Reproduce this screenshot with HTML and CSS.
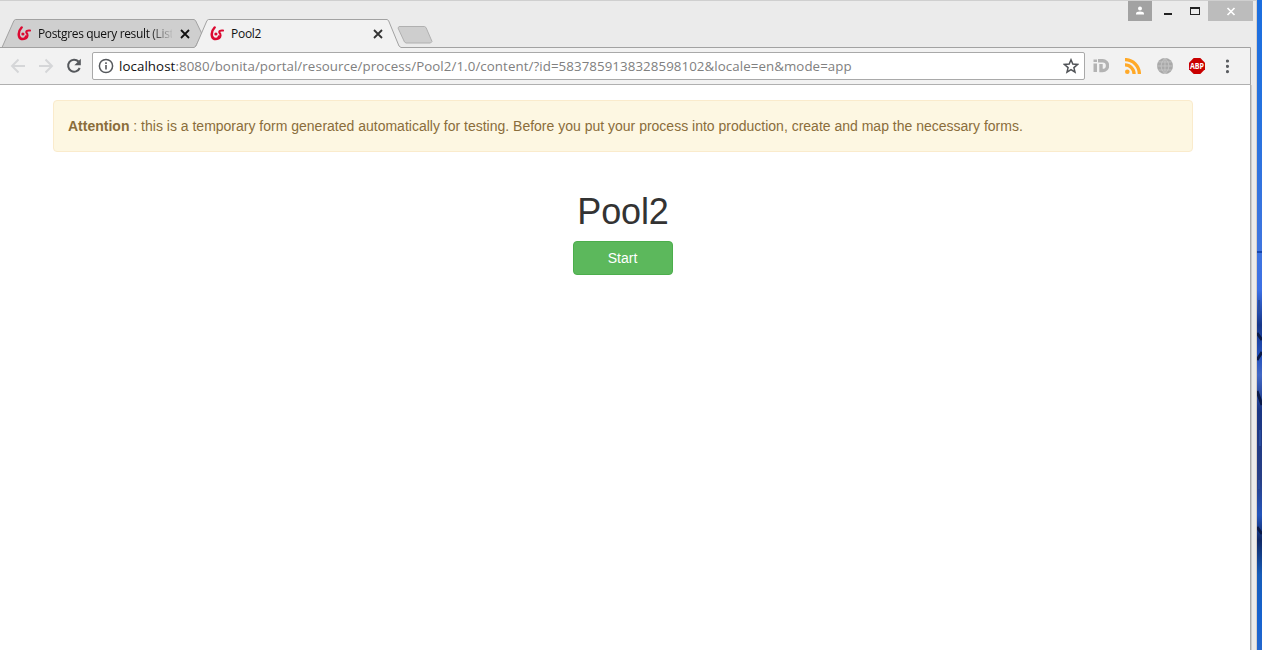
FILE: index.html
```html
<!DOCTYPE html>
<html lang="en">
<head>
<meta charset="utf-8">
<title>Pool2</title>
<link rel="stylesheet" href="styles.css">
</head>
<body>
<div class="window">
  <header class="tabstrip">
    <svg class="tab-shapes" width="1251" height="48" viewBox="0 0 1251 48">
      <path d="M2 47.500L14 20.500L15.500 19.500H194L195.500 20.500L202 34L195 47.500Z" fill="#cfcfcf" stroke="#a2a2a2"/>
      <path d="M0 47.500H194L196 46L207 20.500L208.500 19.500H387L388.500 20.500L399 46L401 47.500H1250.500V49H0Z" fill="#f2f2f2" stroke="#a2a2a2"/>
      <path d="M399 26.500H424.500L426 27.500L432 41.500L430.500 43H406L404.500 42L398 28Z" fill="#cecece" stroke="#b0b0b0"/>
    </svg>
    <div class="tab tab-first">
      <svg class="logo" width="14" height="16" viewBox="0 0 14 16"><use href="#bonita"/></svg>
      <span class="tab-title faded">Postgres query result (List</span>
      <svg class="tab-close" width="10" height="10" viewBox="0 0 10 10"><path d="M1 1l8 8M9 1L1 9"/></svg>
    </div>
    <div class="tab">
      <svg class="logo" width="14" height="16" viewBox="0 0 14 16"><g id="bonita" fill="none" stroke="#dc0a32" stroke-linecap="round"><path d="M4.600 1.500C2.200 4 1.300 7.500 2.100 10.500C3.200 13.900 8.300 13.900 9 10.500" stroke-width="2.500"/><path d="M13 4.600C10.500 4.200 8.600 5.200 9.500 6.800C11 8.400 11 11 9 12.300" stroke-width="2"/><circle cx="5.900" cy="8" r="1.600" fill="#dc0a32" stroke="none"/></g></svg>
      <span class="tab-title">Pool2</span>
      <svg class="tab-close" width="10" height="10" viewBox="0 0 10 10"><path d="M1 1l8 8M9 1L1 9"/></svg>
    </div>
    <div class="controls">
      <span class="profile"><svg width="10" height="10" viewBox="0 0 10 10" fill="#fff"><circle cx="5" cy="2.500" r="2"/><path d="M1 8.500V7.500Q1 5.500 5 5.500T9 7.500V8.500Z"/></svg></span>
      <svg width="56" height="19" viewBox="0 0 56 19"><path d="M12 12h8v2h-8zM38 6h10v8h-10zM39 8v5h8v-5z" fill="#222" fill-rule="evenodd"/></svg>
      <span class="close"><svg width="10" height="9" viewBox="0 0 10 9"><path d="M1.500 1l7 7M8.500 1l-7 7" stroke="#fff" stroke-width="1.700"/></svg></span>
    </div>
  </header>
  <nav class="toolbar">
    <svg class="nav-icons" width="92" height="36" viewBox="0 0 92 36" fill="none" stroke-width="1.900">
      <path d="M25 18H12.500M18.500 11.500L12 18L18.500 24.500M39 18H51.500M45.500 11.500L52 18L45.500 24.500" stroke="#d5d6d8"/>
      <path d="M78.500 13.500A6 6 0 1 0 79.700 20" stroke="#55585c" stroke-width="2"/><path d="M80.800 10.800V17.200H74.400Z" fill="#55585c"/>
    </svg>
    <div class="omnibox">
      <svg width="16" height="16" viewBox="0 0 16 16"><circle cx="8" cy="8" r="6.600" fill="none" stroke="#55585c" stroke-width="1.500"/><path d="M7.200 7h1.600v4.600H7.200zM7.200 4.300h1.600v1.600H7.200z" fill="#55585c"/></svg>
      <span class="url"><b>localhost</b>:8080/bonita/portal/resource/process/Pool2/1.0/content/?id=5837859138328598102&amp;locale=en&amp;mode=app</span>
      <svg class="star" width="16" height="16" viewBox="0 0 16 16"><path d="M8 1.800L9.800 6.100L14.500 6.500L10.900 9.600L12 14.200L8 11.700L4 14.200L5.100 9.600L1.500 6.500L6.200 6.100Z" fill="none" stroke="#505357" stroke-width="1.500"/></svg>
    </div>
    <div class="extensions">
      <svg width="16" height="16" viewBox="0 0 16 16"><path d="M.5 1.500h3.500v2.500H.5zM.5 5.500h3.500v8.500H.5z" fill="#b3b3b3"/><path d="M5 2.800h4.700a4.800 4.800 0 0 1 0 9.700H8V6" fill="none" stroke="#b3b3b3" stroke-width="3.400"/></svg>
      <svg width="16" height="16" viewBox="0 0 16 16"><circle cx="2.300" cy="13.700" r="2.300" fill="#ffa928"/><path d="M0 6.900a9.100 9.100 0 0 1 9.100 9.100M0 1.600a14.400 14.400 0 0 1 14.400 14.400" fill="none" stroke="#ffa928" stroke-width="3.300"/></svg>
      <svg width="16" height="16" viewBox="0 0 16 16"><circle cx="8" cy="8" r="8" fill="#a9a9a9"/><path d="M8 0v16M0 8h16M1.500 4h13M1.500 12h13M8 0Q0 8 8 16M8 0Q16 8 8 16" fill="none" stroke="#c9c9c9" stroke-width=".8"/></svg>
      <svg width="16" height="16" viewBox="0 0 16 16"><path d="M4.700 0h6.600L16 4.700v6.600L11.300 16H4.700L0 11.300V4.700Z" fill="#c90000"/><text class="abp" x="8" y="11" text-anchor="middle" textLength="14" lengthAdjust="spacingAndGlyphs">ABP</text></svg>
      <svg class="menu" width="4" height="16" viewBox="0 0 4 16" fill="#5a5d61"><circle cx="1.500" cy="3" r="1.600"/><circle cx="1.500" cy="8.300" r="1.600"/><circle cx="1.500" cy="13.600" r="1.600"/></svg>
    </div>
  </nav>
  <main class="page">
    <div class="alert"><strong>Attention</strong> : this is a temporary form generated automatically for testing. Before you put your process into production, create and map the necessary forms.</div>
    <h1 class="title">Pool2</h1>
    <button class="start">Start</button>
  </main>
</div>
<div class="desktop"><svg width="5" height="650" viewBox="0 0 5 650" fill="none" stroke="#0a1a48">
  <path d="M0 252h5" stroke="#1747ae" stroke-width="2"/><path d="M0 333l5 7M0 360l5-8M0 391l5 14M0 527l5 7" stroke-width="3"/><path d="M2 300v12M3 430v16M2 480v9" stroke="#294c9e" stroke-width="2"/>
</svg></div>
</body>
</html>
```

FILE: styles.css
```css
* { box-sizing: border-box; }
body { margin: 0; height: 650px; display: flex; overflow: hidden; background: #ebebeb; font-family: "Liberation Sans", Arial, sans-serif; }
svg { display: block; flex: none; }
.window { width: 1257px; height: 650px; display: flex; flex-direction: column; border-top: 1px solid #cfcfcf; border-right: 1px solid #d8cfc9; background: #ebebeb; }
.tabstrip { position: relative; height: 47px; display: flex; flex: none; }
.tab-shapes { position: absolute; left: 0; top: -1px; }
.tab { position: relative; width: 193px; height: 28px; margin-top: 19px; padding-left: 1px; display: flex; align-items: center; }
.tab-first { width: 209px; padding-left: 17px; }
.tab-title { width: 134px; margin-left: 7px; overflow: hidden; white-space: nowrap; font: 12px/18px "Open Sans", sans-serif; letter-spacing: -0.27px; color: #111; }
.tab-close { margin-left: 8px; stroke: #333; stroke-width: 1.8; }
.tab-first .tab-close { stroke: #111; }
.faded { letter-spacing: -0.35px; -webkit-mask-image: linear-gradient(90deg, #000 112px, transparent 136px); mask-image: linear-gradient(90deg, #000 112px, transparent 136px); }
.controls { position: relative; display: flex; height: 20px; margin-left: auto; margin-right: 3px; }
.profile, .close { display: flex; align-items: center; justify-content: center; height: 20px; }
.profile { width: 24px; background: #a2a2a2; }
.close { width: 45px; background: #bcbcbc; }
.toolbar { position: relative; width: 1251px; height: 37px; flex: none; display: flex; align-items: center; background: #f2f2f2; border-right: 1px solid #a2a2a2; border-bottom: 1px solid #b0b0b0; }
.omnibox { width: 993px; height: 28px; display: flex; align-items: center; padding: 0 5px; background: #fff; border: 1px solid #a9a9a9; border-radius: 2px; }
.url { margin-left: 5px; font: 13.3px/20px "Open Sans", sans-serif; letter-spacing: 0.078px; color: #808080; white-space: nowrap; }
.url b { font-weight: 400; color: #111; }
.star { margin-left: auto; }
.extensions { display: flex; gap: 16px; margin-left: 8px; }
.extensions .menu { margin-left: 5px; }
.abp { font: bold 8px "Open Sans", sans-serif; fill: #fff; }
.page { width: 1251px; flex: 1; padding: 15px 57px 0 53px; display: flex; flex-direction: column; align-items: center; background: #fff; border-right: 1px solid #a9a9a9; box-shadow: 1px 0 #cdcdcd; }
.alert { align-self: stretch; height: 52px; padding: 15px 14px; font-size: 14px; line-height: 20px; white-space: nowrap; color: #8a6d3b; background: #fdf7e2; border: 1px solid #faebcc; border-radius: 4px; }
.title { margin: 40px 0 9px; font-size: 36px; line-height: 40px; font-weight: 500; letter-spacing: -0.15px; color: #333; }
.start { width: 100px; height: 34px; padding: 0 1px 0 0; font: 14px/20px "Liberation Sans", Arial, sans-serif; color: #fff; background: #5cb85c; border: 1px solid #4cae4c; border-radius: 4px; }
.desktop { width: 5px; height: 650px; background: linear-gradient(#1b6edf 0, #2572df 110px, #3f75df 250px, #3c70e5 290px, #173789 325px, #2451bc 355px, #4268c5 375px, #1a3684 410px, #283f86 480px, #2455bb 515px, #102966 540px, #175dba 575px, #1763d0 620px, #2467cd); }
```
